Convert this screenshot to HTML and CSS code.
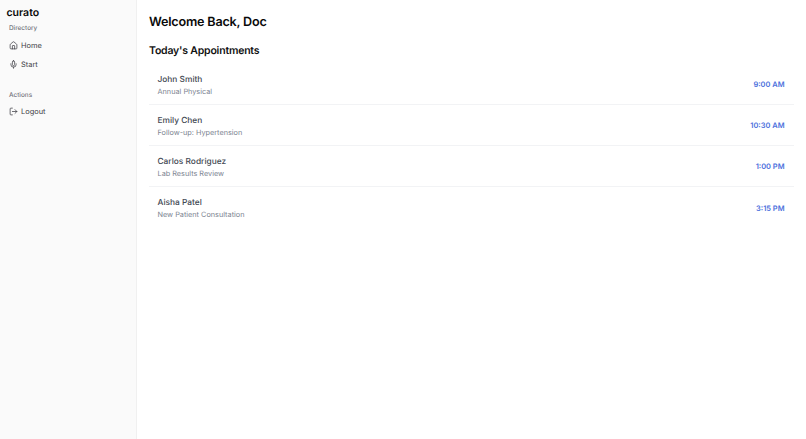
FILE: index.html
```html
<!DOCTYPE html>
<html lang="en">
<head>
<meta charset="utf-8">
<title>curato</title>
<link rel="stylesheet" href="styles.css">
</head>
<body>
<div class="app">
  <aside class="sidebar">
    <div class="logo">curato</div>
    <div class="group-label">Directory</div>
    <nav class="nav">
      <a class="nav-item"><svg class="icon" viewBox="0 0 24 24"><path d="M15 21v-8a1 1 0 0 0-1-1h-4a1 1 0 0 0-1 1v8"/><path d="M3 10a2 2 0 0 1 .709-1.528l7-5.999a2 2 0 0 1 2.582 0l7 5.999A2 2 0 0 1 21 10v9a2 2 0 0 1-2 2H5a2 2 0 0 1-2-2z"/></svg>Home</a>
      <a class="nav-item"><svg class="icon" viewBox="0 0 24 24"><path d="M12 2a3 3 0 0 0-3 3v7a3 3 0 0 0 6 0V5a3 3 0 0 0-3-3Z"/><path d="M19 10v2a7 7 0 0 1-14 0v-2"/><path d="M12 19v3"/></svg>Start</a>
    </nav>
    <div class="group-label group-actions">Actions</div>
    <nav class="nav">
      <a class="nav-item"><svg class="icon" viewBox="0 0 24 24"><path d="M9 21H5a2 2 0 0 1-2-2V5a2 2 0 0 1 2-2h4"/><path d="m16 17 5-5-5-5"/><path d="M21 12H9"/></svg>Logout</a>
    </nav>
  </aside>
  <main class="main">
    <h1 class="title">Welcome Back, Doc</h1>
    <h2 class="subtitle">Today's Appointments</h2>
    <ul class="list">
      <li class="row"><div class="info"><div class="name">John Smith</div><div class="reason">Annual Physical</div></div><div class="time">9:00 AM</div></li>
      <li class="row"><div class="info"><div class="name">Emily Chen</div><div class="reason">Follow-up: Hypertension</div></div><div class="time">10:30 AM</div></li>
      <li class="row"><div class="info"><div class="name">Carlos Rodriguez</div><div class="reason">Lab Results Review</div></div><div class="time">1:00 PM</div></li>
      <li class="row"><div class="info"><div class="name">Aisha Patel</div><div class="reason">New Patient Consultation</div></div><div class="time">3:15 PM</div></li>
    </ul>
  </main>
</div>
</body>
</html>
```
FILE: styles.css
```css
* { box-sizing: border-box; }
html, body { margin: 0; height: 100%; }
body { font-family: Inter, "Liberation Sans", sans-serif; background: #fff; color: #0a0a0a; text-rendering: geometricPrecision; }
.app { display: flex; height: 439px; overflow: hidden; }
.sidebar { width: 137px; flex: none; background: #fafafa; border-right: 1px solid #f0f0f0; padding: 6px 4px 0; }
.logo { font-size: 10.5px; font-weight: 600; line-height: 14px; padding-left: 2.5px; }
.group-label { font-size: 6.4px; line-height: 10px; color: #74747c; font-weight: 500; padding-left: 5px; margin-top: 3px; }
.group-actions { margin-top: 16px; }
.nav { display: flex; flex-direction: column; margin-top: 2.5px; }
.nav-item { display: flex; align-items: center; gap: 3.5px; height: 19px; padding-left: 4.5px; font-size: 7.45px; color: #3f3f46; }
.icon { width: 9px; height: 9px; fill: none; stroke: #3f3f46; stroke-width: 2; stroke-linecap: round; stroke-linejoin: round; flex: none; }
.main { flex: 1; padding: 14px 12.5px 0 12px; }
.title { margin: 0; font-size: 12.6px; line-height: 18px; font-weight: 600; letter-spacing: -0.2px; color: #0a0a0a; }
.subtitle { margin: 11px 0 0; font-size: 10.5px; line-height: 15px; font-weight: 600; letter-spacing: -0.2px; color: #111; }
.list { list-style: none; margin: 6px 0 0; padding: 0; }
.row { display: flex; justify-content: space-between; align-items: center; height: 41px; padding: 0 9px 0 8.5px; border-bottom: 1px solid #f2f3f5; }
.row:last-child { border-bottom: 0; }
.info { margin-top: 2px; }
.name { font-size: 8.35px; line-height: 12px; font-weight: 500; color: #434954; }
.reason { font-size: 7.3px; line-height: 11px; color: #7d8491; margin-top: 0; }
.time { font-size: 7.45px; font-weight: 600; color: #4a6fdc; margin-top: 1px; }
```
